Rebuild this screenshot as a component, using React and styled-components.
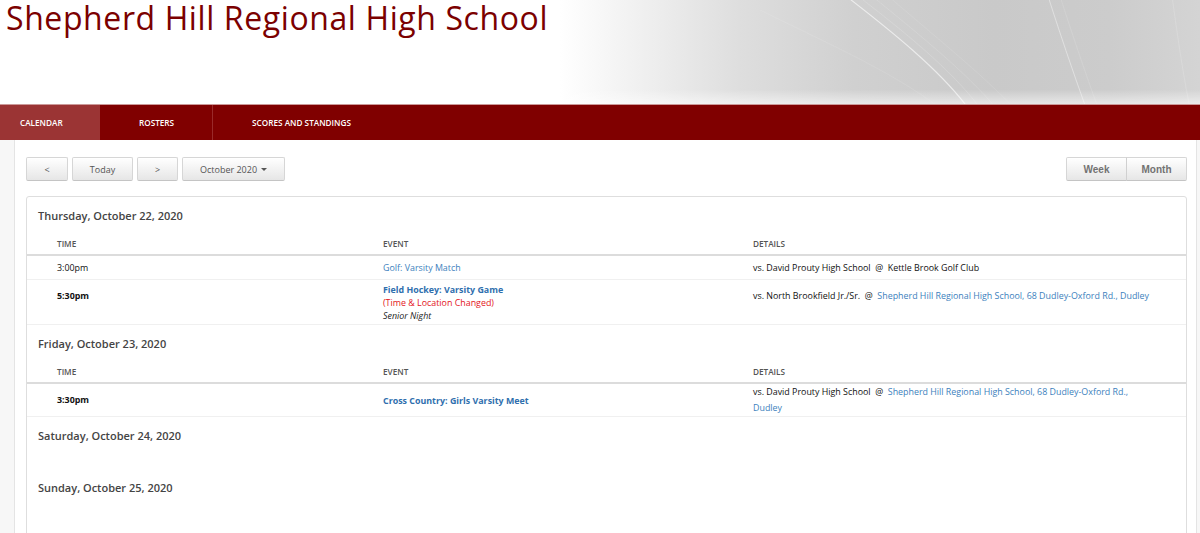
import styled, { createGlobalStyle } from "styled-components";

const GlobalStyle = createGlobalStyle`
  html, body { margin: 0; padding: 0; }
  body {
    background: #f7f7f7;
    font-family: "Open Sans", "Noto Sans", Arial, sans-serif;
    color: #222;
  }
`;

const days = [
  {
    label: "Thursday, October 22, 2020",
    events: [
      {
        time: "3:00pm",
        title: "Golf: Varsity Match",
        strong: false,
        opponent: "vs. David Prouty High School",
        place: "Kettle Brook Golf Club",
        placeLink: false,
      },
      {
        time: "5:30pm",
        title: "Field Hockey: Varsity Game",
        strong: true,
        changed: "(Time & Location Changed)",
        note: "Senior Night",
        opponent: "vs. North Brookfield Jr./Sr.",
        place: "Shepherd Hill Regional High School, 68 Dudley-Oxford Rd., Dudley",
        placeLink: true,
      },
    ],
  },
  {
    label: "Friday, October 23, 2020",
    events: [
      {
        time: "3:30pm",
        title: "Cross Country: Girls Varsity Meet",
        strong: true,
        opponent: "vs. David Prouty High School",
        place: "Shepherd Hill Regional High School, 68 Dudley-Oxford Rd., Dudley",
        placeLink: true,
      },
    ],
  },
  { label: "Saturday, October 24, 2020", events: [] },
  { label: "Sunday, October 25, 2020", events: [] },
  { label: "Monday, October 26, 2020", events: [] },
];

const App = () => {
  return (
    <>
      <GlobalStyle />
      <Header>
        <Title>Shepherd Hill Regional High School</Title>
        <Art>
          <svg width="640" height="104" viewBox="0 0 640 104">
            <path d="M286 -4 C 330 30, 380 70, 408 108" stroke="#fff" strokeWidth="1.1" fill="none" opacity="0.6" />
            <path d="M298 -4 C 342 30, 392 70, 420 108" stroke="#fff" strokeWidth="0.5" fill="none" opacity="0.3" />
            <path d="M312 -4 C 356 32, 406 72, 436 108" stroke="#fff" strokeWidth="0.5" fill="none" opacity="0.25" />
            <path d="M328 -4 C 372 34, 422 74, 454 108" stroke="#fff" strokeWidth="0.5" fill="none" opacity="0.2" />
            <path d="M200 10 C 260 40, 330 70, 380 108" stroke="#fff" strokeWidth="0.5" fill="none" opacity="0.2" />
            <path d="M488 -4 C 502 40, 516 80, 526 108" stroke="#fff" strokeWidth="0.9" fill="none" opacity="0.45" />
            <path d="M500 -4 C 514 40, 528 80, 538 108" stroke="#fff" strokeWidth="0.5" fill="none" opacity="0.25" />
            <path d="M612 -4 C 618 40, 624 80, 630 108" stroke="#fff" strokeWidth="0.5" fill="none" opacity="0.3" />
          </svg>
        </Art>
      </Header>
      <NavBar>
        <NavItem $active $first>Calendar</NavItem>
        <NavItem>Rosters</NavItem>
        <NavItem $last>Scores and Standings</NavItem>
      </NavBar>
      <Main>
        <Toolbar>
          <BtnRow>
            <Btn $w={42}>&lt;</Btn>
            <Btn $w={61}>Today</Btn>
            <Btn $w={41}>&gt;</Btn>
            <Btn $w={103}>
              October 2020 <Caret />
            </Btn>
          </BtnRow>
          <BtnGroup>
            <Btn $w={61} $bold $joinRight>Week</Btn>
            <Btn $w={61} $bold $joinLeft>Month</Btn>
          </BtnGroup>
        </Toolbar>
        <Card>
          {days.map((day) => (
            <Day key={day.label} $empty={day.events.length === 0}>
              <DayHeading>{day.label}</DayHeading>
              {day.events.length > 0 && (
                <>
                  <HeadRow>
                    <HeadCell>Time</HeadCell>
                    <HeadCell>Event</HeadCell>
                    <HeadCell>Details</HeadCell>
                  </HeadRow>
                  {day.events.map((ev) => (
                    <Row key={ev.time + ev.title}>
                      <TimeCell $strong={ev.strong} $lift={!!ev.note}>
                        {ev.time}
                      </TimeCell>
                      <EventCell>
                        <EventLink $strong={ev.strong}>{ev.title}</EventLink>
                        {ev.changed && <Changed>{ev.changed}</Changed>}
                        {ev.note && <Note>{ev.note}</Note>}
                      </EventCell>
                      <DetailCell $lift={!!ev.note}>
                        {ev.opponent}&nbsp; @&nbsp;{" "}
                        {ev.placeLink ? <PlaceLink>{ev.place}</PlaceLink> : ev.place}
                      </DetailCell>
                    </Row>
                  ))}
                </>
              )}
            </Day>
          ))}
        </Card>
      </Main>
    </>
  );
};

const Header = styled.header`
  display: flex;
  height: 104px;
  background: #fff;
  overflow: hidden;
`;

const Title = styled.h1`
  flex: none;
  width: 560px;
  margin: 0;
  padding: 1px 0 0 6px;
  box-sizing: border-box;
  font-family: "Open Sans", "Noto Sans", sans-serif;
  font-weight: 400;
  font-size: 32px;
  letter-spacing: 0.6px;
  line-height: 34px;
  color: #7b0000;
  white-space: nowrap;
`;

const Art = styled.div`
  flex: 1;
  display: flex;
  justify-content: flex-end;
  background:
    linear-gradient(to bottom, rgba(255, 255, 255, 0) 86%, rgba(255, 255, 255, 0.55) 100%),
    linear-gradient(to right, #ffffff 0%, #f3f3f3 10%, #dedede 28%, #d0d0d0 46%, #c9c9c9 68%, #cccccc 86%, #d4d4d4 100%);
`;

const NavBar = styled.nav`
  display: flex;
  height: 36px;
  background: #800000;
  border-top: 1px solid #c99;
  box-sizing: border-box;
`;

const NavItem = styled.div`
  display: flex;
  align-items: center;
  padding: 0 38px 0 ${(p) => (p.$first ? "20px" : "39px")};
  width: ${(p) => (p.$first ? "100px" : "auto")};
  box-sizing: border-box;
  background: ${(p) => (p.$active ? "#9b3434" : "transparent")};
  border-right: ${(p) => (p.$last || p.$active ? "none" : "1px solid #9a2a2a")};
  color: #fff;
  font-size: 8.2px;
  font-weight: 600;
  text-transform: uppercase;
  white-space: nowrap;
`;

const Main = styled.main`
  margin: 0 3px 0 14px;
  min-height: 400px;
  padding: 17px 9px 40px 11px;
  background: #fff;
  border-left: 1px solid #e4e4e4;
  border-right: 1px solid #e4e4e4;
`;

const Toolbar = styled.div`
  display: flex;
  justify-content: space-between;
  align-items: center;
  margin-bottom: 15px;
`;

const BtnRow = styled.div`
  display: flex;
  gap: 4px;
`;

const BtnGroup = styled.div`
  display: flex;
`;

const Btn = styled.button`
  display: flex;
  align-items: center;
  justify-content: center;
  gap: 4px;
  width: ${(p) => p.$w}px;
  height: 24px;
  padding: 0;
  font-family: ${(p) => (p.$bold ? '"Liberation Sans", Arial, sans-serif' : '"Open Sans", sans-serif')};
  font-size: ${(p) => (p.$bold ? "10px" : "9px")};
  font-weight: ${(p) => (p.$bold ? 700 : 400)};
  color: ${(p) => (p.$bold ? "#727272" : "#555")};
  background: linear-gradient(to bottom, #ffffff 0%, #e6e6e6 100%);
  border: 1px solid #d6d6d6;
  border-bottom-color: #c4c4c4;
  border-radius: ${(p) => (p.$joinRight ? "2px 0 0 2px" : p.$joinLeft ? "0 2px 2px 0" : "2px")};
  border-left-color: ${(p) => (p.$joinLeft ? "#d0d0d0" : "#d6d6d6")};
  margin-left: ${(p) => (p.$joinLeft ? "-1px" : "0")};
  box-shadow: inset 0 1px 0 rgba(255, 255, 255, 0.6);
`;

const Caret = styled.span`
  display: inline-block;
  width: 0;
  height: 0;
  border-left: 3px solid transparent;
  border-right: 3px solid transparent;
  border-top: 3px solid #555;
`;

const Card = styled.section`
  border: 1px solid #dedede;
  border-radius: 3px;
  background: #fff;
`;

const Day = styled.div`
  padding-bottom: ${(p) => (p.$empty ? "16px" : "0")};
`;

const DayHeading = styled.h2`
  margin: 0;
  height: 36px;
  padding-left: 11px;
  display: flex;
  align-items: center;
  font-size: 11px;
  font-weight: 600;
  color: #444;
`;

const grid = `
  display: grid;
  grid-template-columns: 344px 370px 1fr;
`;

const HeadRow = styled.div`
  ${grid}
  height: 23px;
  align-items: center;
  border-bottom: 2px solid #dcdcdc;
  box-sizing: border-box;
`;

const HeadCell = styled.div`
  padding-left: 12px;
  font-size: 8.2px;
  font-weight: 600;
  color: #555;
  text-transform: uppercase;
  &:first-child { padding-left: 30px; }
`;

const Row = styled.div`
  ${grid}
  align-items: center;
  min-height: 24px;
  box-sizing: border-box;
  border-bottom: 1px solid #f0f0f0;
  font-size: 8.9px;
  color: #111;
`;

const TimeCell = styled.div`
  padding-left: 30px;
  padding-bottom: ${(p) => (p.$lift ? "12px" : "0")};
  line-height: 16px;
  font-weight: ${(p) => (p.$strong ? 700 : 400)};
`;

const EventCell = styled.div`
  padding: 2.5px 0 2.5px 12px;
  display: flex;
  flex-direction: column;
  line-height: 13px;
`;

const EventLink = styled.a`
  color: ${(p) => (p.$strong ? "#2f6fae" : "#3d7fbd")};
  font-weight: ${(p) => (p.$strong ? 700 : 400)};
  text-decoration: none;
  cursor: pointer;
`;

const Changed = styled.span`
  color: #e3141b;
`;

const Note = styled.span`
  font-style: italic;
  color: #222;
`;

const DetailCell = styled.div`
  padding: 0 29px ${(p) => (p.$lift ? "12px" : "0")} 12px;
  line-height: 16px;
`;

const PlaceLink = styled.a`
  color: #3d7fbd;
  text-decoration: none;
  cursor: pointer;
`;

export default App;
